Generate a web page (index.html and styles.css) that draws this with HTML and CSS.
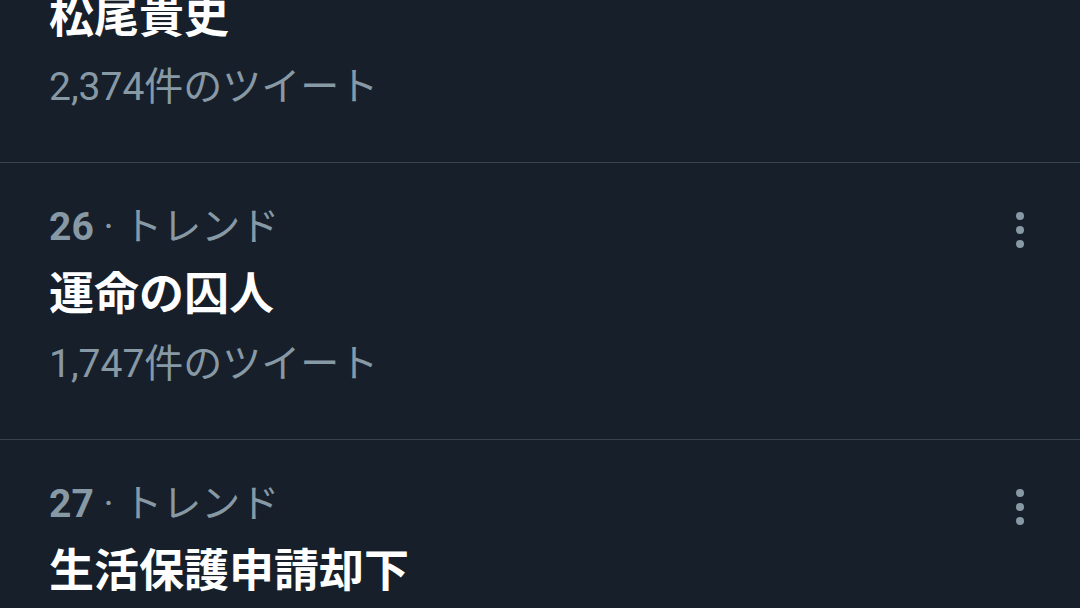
FILE: index.html
```html
<!DOCTYPE html>
<html>
<head>
    <title>トレンド</title>
    <link rel="stylesheet" href="styles.css">
</head>
<body>
    <div class="trend-list">
        <div class="trend">
            <div class="trend-body">
                <div class="trend-meta"><b>25</b> · トレンド</div>
                <div class="trend-name">松尾貴史</div>
                <div class="trend-count">2,374件のツイート</div>
            </div>
            <div class="more"><span></span><span></span><span></span></div>
        </div>
        <div class="trend">
            <div class="trend-body">
                <div class="trend-meta"><b>26</b> · トレンド</div>
                <div class="trend-name">運命の囚人</div>
                <div class="trend-count">1,747件のツイート</div>
            </div>
            <div class="more"><span></span><span></span><span></span></div>
        </div>
        <div class="trend">
            <div class="trend-body">
                <div class="trend-meta"><b>27</b> · トレンド</div>
                <div class="trend-name">生活保護申請却下</div>
                <div class="trend-count">1,203件のツイート</div>
            </div>
            <div class="more"><span></span><span></span><span></span></div>
        </div>
    </div>
</body>
</html>
```

FILE: styles.css
```css
body {
    margin: 0;
    background-color: #17202a;
    font-family: Roboto, "Noto Sans CJK JP", sans-serif;
    overflow: hidden;
}

.trend-list {
    margin-top: -114px;
}

.trend {
    display: flex;
    justify-content: space-between;
    padding: 30px 0 40px 49px;
    border-bottom: 1px solid #38444d;
}

.trend-meta {
    font-size: 39px;
    line-height: 68px;
    color: #8899a6;
}

.trend-meta b {
    font-weight: 700;
}

.trend-name {
    font-size: 45px;
    font-weight: 700;
    line-height: 68px;
    color: #ffffff;
}

.trend-count {
    font-size: 39px;
    line-height: 70px;
    color: #8899a6;
}

.more {
    display: flex;
    flex-direction: column;
    align-items: center;
    gap: 6px;
    width: 40px;
    margin-right: 40px;
    padding-top: 19px;
}

.more span {
    width: 8px;
    height: 8px;
    border-radius: 50%;
    background-color: #8899a6;
}
```
